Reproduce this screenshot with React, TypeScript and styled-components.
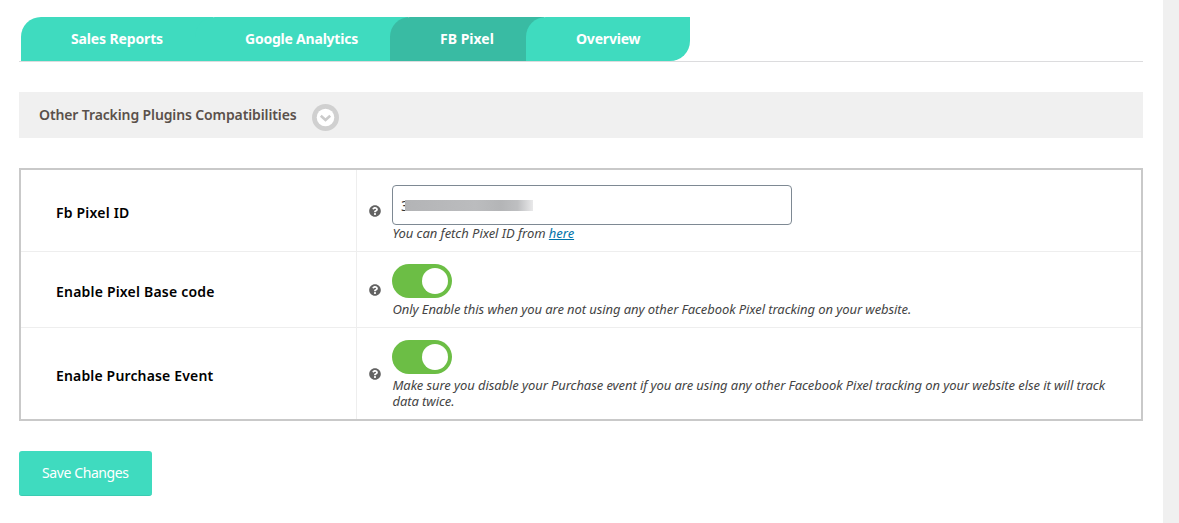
import React, { useState } from "react";
import styled, { createGlobalStyle } from "styled-components";
import { FaQuestionCircle } from "react-icons/fa";

const TABS = [
  { label: "Sales Reports", width: 192, spacing: -0.14 },
  { label: "Google Analytics", width: 213, spacing: -0.22 },
  { label: "FB Pixel", width: 154, spacing: 0 },
  { label: "Overview", width: 164, spacing: -0.2 },
];

export const App = () => {
  const [activeTab, setActiveTab] = useState("FB Pixel");
  const [baseCode, setBaseCode] = useState(true);
  const [purchase, setPurchase] = useState(true);

  return (
    <>
      <GlobalStyle />
      <Page>
        <Content>
          <TabBar>
            {TABS.map((tab) => (
              <Tab
                key={tab.label}
                $width={tab.width}
                $active={tab.label === activeTab}
                onClick={() => setActiveTab(tab.label)}
              >
                <Text $spacing={tab.spacing}>{tab.label}</Text>
              </Tab>
            ))}
          </TabBar>

          <Accordion>
            <Text $spacing={-0.12}>Other Tracking Plugins Compatibilities</Text>
            <Chevron />
          </Accordion>

          <Table>
            <Row $height={82}>
              <Label>
                <Text $spacing={0.2}>Fb Pixel ID</Text>
              </Label>
              <Field>
                <HelpIcon />
                <FieldBody $top={15}>
                  <PixelInput>
                    <span>3</span>
                    <Redacted />
                  </PixelInput>
                  <Description>
                    <Text $spacing={-0.04}>
                      You can fetch Pixel ID from <Link href="#">here</Link>
                    </Text>
                  </Description>
                </FieldBody>
              </Field>
            </Row>
            <Row $height={76}>
              <Label>
                <Text $spacing={0.2}>Enable Pixel Base code</Text>
              </Label>
              <Field>
                <HelpIcon />
                <FieldBody $top={12}>
                  <Toggle $on={baseCode} onClick={() => setBaseCode(!baseCode)} />
                  <Description $gap={3}>
                    <Text $spacing={-0.08}>
                      Only Enable this when you are not using any other Facebook Pixel tracking on your website.
                    </Text>
                  </Description>
                </FieldBody>
              </Field>
            </Row>
            <Row $height={91}>
              <Label>
                <Text $spacing={0.16}>Enable Purchase Event</Text>
              </Label>
              <Field>
                <HelpIcon />
                <FieldBody $top={12}>
                  <Toggle $on={purchase} onClick={() => setPurchase(!purchase)} />
                  <Description $gap={3}>
                    <Text $spacing={-0.08}>
                      Make sure you disable your Purchase event if you are using any other Facebook Pixel tracking on your website else it will track
                      <br />
                      data twice.
                    </Text>
                  </Description>
                </FieldBody>
              </Field>
            </Row>
          </Table>

          <SaveButton>
            <Text $spacing={-0.4}>Save Changes</Text>
          </SaveButton>
        </Content>
        <Gutter />
      </Page>
    </>
  );
};

export default App;

const HelpIcon = () => (
  <HelpWrapper>
    <FaQuestionCircle size={12} />
  </HelpWrapper>
);

const Chevron = () => (
  <ChevronSvg width="27" height="27" viewBox="0 0 27 27">
    <circle cx="13.5" cy="13.5" r="13.5" fill="#d0d0d0" />
    <circle cx="13.5" cy="13.5" r="8.8" fill="#fff" />
    <path d="M8.8 11.7l4.7 4.2 4.7-4.2" fill="none" stroke="#cbcbcb" strokeWidth="2.6" />
  </ChevronSvg>
);

const GlobalStyle = createGlobalStyle`
  * {
    box-sizing: border-box;
  }

  body {
    margin: 0;
    background: #fff;
    font-family: "Noto Sans", "Open Sans", sans-serif;
  }
`;

const Page = styled.div`
  display: flex;
  height: 523px;
  overflow: hidden;
`;

const Content = styled.main`
  width: 1163px;
  padding: 17px 20px 0 19px;
`;

const Gutter = styled.div`
  flex: 1;
  background: #f0f0f0;
`;

const Text = styled.span<{ $spacing: number }>`
  letter-spacing: ${(props) => props.$spacing}px;
  white-space: nowrap;
`;

const TabBar = styled.nav`
  display: flex;
  height: 45px;
  padding-left: 2px;
  border-bottom: 1px solid #dcdcde;
`;

const Tab = styled.button<{ $width: number; $active: boolean }>`
  width: ${(props) => props.$width}px;
  height: 44px;
  margin-right: -18px;
  padding: 0 0 0 50px;
  border: 0;
  border-radius: 20px 0 0 0;
  background: ${(props) => (props.$active ? "#39bba3" : "#3fdbbf")};
  color: #fff;
  font: 700 14px/44px "Noto Sans", sans-serif;
  text-align: left;
  cursor: pointer;

  &:last-child {
    margin-right: 0;
    border-radius: 20px 0 20px 0;
  }
`;

const Accordion = styled.div`
  display: flex;
  height: 46px;
  margin-top: 30px;
  padding-left: 20px;
  background: #f0f0f0;
  color: #5a504b;
  font-size: 14px;
  font-weight: 600;
  line-height: 45px;
`;

const ChevronSvg = styled.svg`
  margin: 12px 0 0 15px;
`;

const Table = styled.div`
  height: 253px;
  margin-top: 30px;
  border: 2px solid #c9c9c9;
`;

const Row = styled.div<{ $height: number }>`
  display: grid;
  grid-template-columns: 336px 1fr;
  height: ${(props) => props.$height}px;

  &:not(:last-child) {
    border-bottom: 1px solid #eee;
  }
`;

const Label = styled.div`
  display: flex;
  align-items: center;
  padding: 4px 0 0 35px;
  border-right: 1px solid #eee;
  color: #000;
  font-size: 14px;
  font-weight: 600;
`;

const Field = styled.div`
  display: flex;
`;

const HelpWrapper = styled.span`
  display: flex;
  align-items: center;
  width: 35px;
  padding-left: 12px;
  color: #636363;
`;

const FieldBody = styled.div<{ $top: number }>`
  padding-top: ${(props) => props.$top}px;
`;

const PixelInput = styled.div`
  display: flex;
  align-items: center;
  width: 400px;
  height: 40px;
  padding-left: 8px;
  border: 1px solid #7e8993;
  border-radius: 4px;
  color: #32373c;
  font-size: 14px;
`;

/* covers everything after the left edge of the first digit */
const Redacted = styled.span`
  width: 128px;
  height: 11px;
  margin: 1px 0 0 -4px;
  background: linear-gradient(90deg, #b3b4b6 0, #bbbcbe 55%, #b4b5b7 75%, #bebfc1 88%, #e9e9ea 100%);
`;

const Description = styled.p<{ $gap?: number }>`
  margin: ${(props) => props.$gap ?? 0}px 0 0;
  padding-left: 0.5px;
  color: #444;
  font-size: 13px;
  font-style: italic;
  line-height: 16px;
`;

const Link = styled.a`
  color: #0073aa;
`;

const Toggle = styled.button<{ $on: boolean }>`
  display: flex;
  justify-content: ${(props) => (props.$on ? "flex-end" : "flex-start")};
  align-items: center;
  width: 60px;
  height: 34px;
  padding: 0 4px;
  border: 0;
  border-radius: 17px;
  background: ${(props) => (props.$on ? "#6cbe45" : "#ccc")};
  cursor: pointer;

  &::before {
    content: "";
    width: 26px;
    height: 26px;
    border-radius: 50%;
    background: #fff;
  }
`;

const SaveButton = styled.button`
  width: 133px;
  height: 45px;
  margin-top: 30px;
  padding: 0 0 0 23px;
  border: 0;
  border-bottom: 1px solid #3acbb1;
  border-radius: 3px;
  background: #3fdbbf;
  color: #fff;
  font: 400 14px/44px "Noto Sans", sans-serif;
  text-align: left;
  cursor: pointer;
`;
